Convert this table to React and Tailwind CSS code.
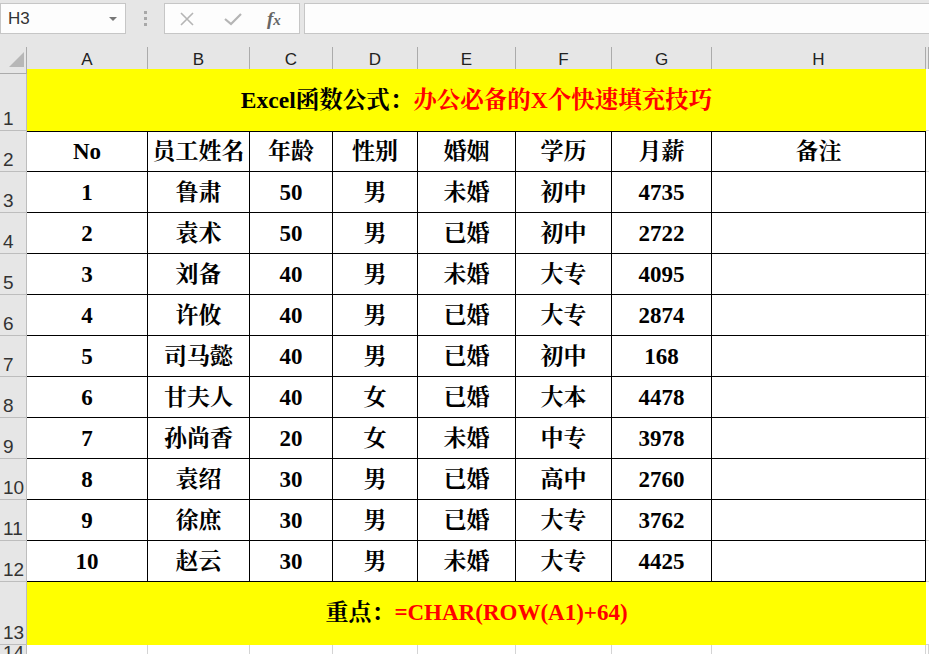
import React from 'react';

const cols = ['A', 'B', 'C', 'D', 'E', 'F', 'G', 'H', ''];
const heads = ['No', '员工姓名', '年龄', '性别', '婚姻', '学历', '月薪', '备注'];

const rows = [
  ['1', '鲁肃', '50', '男', '未婚', '初中', '4735'],
  ['2', '袁术', '50', '男', '已婚', '初中', '2722'],
  ['3', '刘备', '40', '男', '未婚', '大专', '4095'],
  ['4', '许攸', '40', '男', '已婚', '大专', '2874'],
  ['5', '司马懿', '40', '男', '已婚', '初中', '168'],
  ['6', '甘夫人', '40', '女', '已婚', '大本', '4478'],
  ['7', '孙尚香', '20', '女', '未婚', '中专', '3978'],
  ['8', '袁绍', '30', '男', '已婚', '高中', '2760'],
  ['9', '徐庶', '30', '男', '已婚', '大专', '3762'],
  ['10', '赵云', '30', '男', '未婚', '大专', '4425'],
];

const serif = "font-['Liberation_Serif','Noto_Serif_CJK_SC','Noto_Sans_CJK_SC',serif] font-bold";
const ui = "font-['Liberation_Sans','Noto_Sans',sans-serif]";
const gridCols = 'grid grid-cols-[27px_121px_102px_83px_85px_98px_96px_100px_214px_1fr]';

function RowNum({ n, h }) {
  return (
    <div className={`bg-[#e6e6e6] border-r border-b border-[#bdbdbd] flex items-end pl-[3px] pb-[2px] text-[19px] leading-none text-[#333] ${ui} ${h}`}>
      {n}
    </div>
  );
}

export default function App() {
  return (
    <div className="w-[929px] h-[654px] overflow-hidden bg-[#e6e6e6] select-none">
      {/* formula bar */}
      <div className="h-[47px] flex items-start pt-[3px]">
        <div className={`w-[126px] h-[31px] bg-[#fdfdfd] border border-[#c6c6c6] flex items-center justify-between pl-[7px] pr-[8px] text-[17px] text-[#333] ${ui}`}>
          <span>H3</span>
          <span className="w-0 h-0 border-l-[4px] border-r-[4px] border-t-[4px] border-l-transparent border-r-transparent border-t-[#777]" />
        </div>
        <div className="w-[38px] h-[31px] flex flex-col items-center justify-center gap-[3px]">
          <span className="w-[3px] h-[3px] bg-[#a8a8a8]" />
          <span className="w-[3px] h-[3px] bg-[#a8a8a8]" />
          <span className="w-[3px] h-[3px] bg-[#a8a8a8]" />
        </div>
        <div className="w-[136px] h-[31px] bg-[#fdfdfd] border border-[#c6c6c6] flex items-center pl-[13px]">
          <svg width="18" height="14" viewBox="0 0 18 14">
            <path d="M3 1 L15 13 M15 1 L3 13" stroke="#b5b5b5" strokeWidth="1.6" fill="none" />
          </svg>
          <svg width="20" height="14" viewBox="0 0 20 14" className="ml-[27px]">
            <path d="M2 7 L8 12 L18 2" stroke="#b5b5b5" strokeWidth="2.2" fill="none" />
          </svg>
          <span className="ml-[24px] font-['Liberation_Serif',serif] italic font-bold text-[19px] leading-none text-[#666]">
            f<span className="text-[15px]">x</span>
          </span>
        </div>
        <div className="ml-[4px] flex-1 h-[31px] bg-[#fdfdfd] border border-[#c6c6c6] border-r-0" />
      </div>

      {/* column header */}
      <div className={`${gridCols} h-[22px]`}>
        <div className="border-r border-b border-[#ababab] relative">
          <svg width="27" height="22" className="absolute left-0 top-0">
            <path d="M9 20 L24 20 L24 5 Z" fill="#b7b7b7" />
          </svg>
        </div>
        {cols.map((c, i) => (
          <div key={i} className={`border-r border-b border-[#ababab] flex items-center justify-center text-[17px] text-[#222] ${ui}`}>
            {c}
          </div>
        ))}
      </div>

      {/* row 1 */}
      <div className={gridCols}>
        <RowNum n="1" h="h-[62px]" />
        <div className="col-span-8 bg-[#ffff00] flex items-center justify-center pt-[2px]">
          <span className={`${serif} text-[23.5px] text-black`}>
            Excel函数公式：<span className="text-[#ff0000]">办公必备的X个快速填充技巧</span>
          </span>
        </div>
        <div className="bg-white border-b border-[#d4d4d4]" />
      </div>

      {/* row 2 header */}
      <div className={gridCols}>
        <RowNum n="2" h="h-[41px]" />
        {heads.map((t, i) => (
          <div key={i} className={`border-t border-r border-b border-black bg-white flex items-center justify-center pt-[2px] text-[23px] text-black ${serif}`}>
            {t}
          </div>
        ))}
        <div className="bg-white border-b border-[#d4d4d4]" />
      </div>

      {/* data rows */}
      {rows.map((r, ri) => (
        <div key={ri} className={gridCols}>
          <RowNum n={String(ri + 3)} h="h-[41px]" />
          {[...r, ''].map((t, i) => (
            <div key={i} className={`border-r border-b border-black bg-white flex items-center justify-center pt-[2px] text-[23px] text-black ${serif}`}>
              {t}
            </div>
          ))}
          <div className="bg-white border-b border-[#d4d4d4]" />
        </div>
      ))}

      {/* row 13 */}
      <div className={gridCols}>
        <RowNum n="13" h="h-[63px]" />
        <div className="col-span-8 bg-[#ffff00] flex items-center justify-center">
          <span className={`${serif} text-[23px] text-black`}>
            重点：<span className="text-[#ff0000]">=CHAR(ROW(A1)+64)</span>
          </span>
        </div>
        <div className="bg-white border-b border-[#d4d4d4]" />
      </div>

      {/* row 14 */}
      <div className={gridCols}>
        <RowNum n="14" h="h-[20px]" />
        {cols.map((c, i) => (
          <div key={i} className="bg-white border-r border-b border-[#d4d4d4]" />
        ))}
      </div>
    </div>
  );
}
